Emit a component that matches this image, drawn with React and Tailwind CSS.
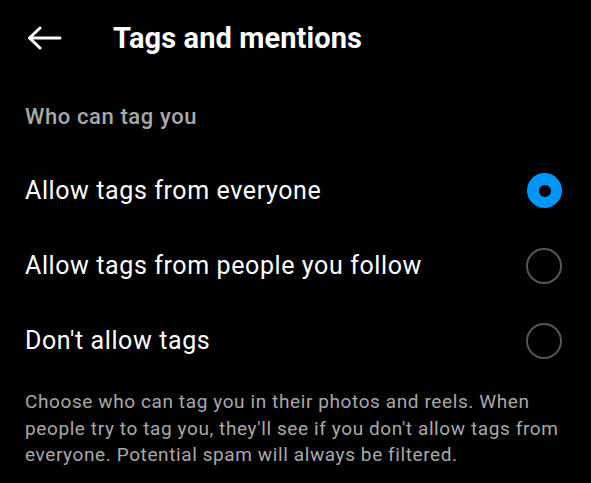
export default function App() {
  const options = [
    { label: 'Allow tags from everyone', selected: true },
    { label: 'Allow tags from people you follow', selected: false },
    { label: "Don't allow tags", selected: false },
  ]

  return (
    <div className="w-[591px] h-[483px] bg-black text-white overflow-hidden" style={{ fontFamily: 'Roboto, "Noto Sans", sans-serif' }}>
      {/* Header */}
      <div className="flex items-center h-[76px] pl-[27px]">
        <svg width="35" height="24" viewBox="0 0 35 24" fill="none" stroke="white" strokeWidth="3" strokeLinecap="round" strokeLinejoin="round">
          <path d="M33 12H3" />
          <path d="M13 2L2.5 12L13 22" />
        </svg>
        <h1 className="ml-[51px] text-[29px] tracking-[0.1px] font-bold leading-none">Tags and mentions</h1>
      </div>

      {/* Section title */}
      <div className="px-[25px] pt-[26px] text-[22px] tracking-[0.6px] font-medium text-[#a8a8a8] leading-[30px]">Who can tag you</div>

      {/* Options */}
      <div className="flex flex-col mt-[21px]">
        {options.map((o) => (
          <div key={o.label} className="flex items-center justify-between h-[75px] pl-[25px] pr-[29px]">
            <span className="text-[25px] tracking-[0.6px] leading-none">{o.label}</span>
            {o.selected ? (
              <div className="w-[35px] h-[35px] rounded-full bg-[#0095f6] flex items-center justify-center">
                <div className="w-[12px] h-[12px] rounded-full bg-black" />
              </div>
            ) : (
              <div className="w-[36px] h-[36px] rounded-full border-[2px] border-[#555555]" />
            )}
          </div>
        ))}
      </div>

      {/* Description */}
      <p className="px-[25px] mt-[11px] text-[19px] tracking-[0.6px] leading-[26.5px] text-[#a8a8a8]">
        Choose who can tag you in their photos and reels. When people try to tag you, they'll see if you don't allow tags from everyone. Potential spam will always be filtered.
      </p>
    </div>
  )
}
